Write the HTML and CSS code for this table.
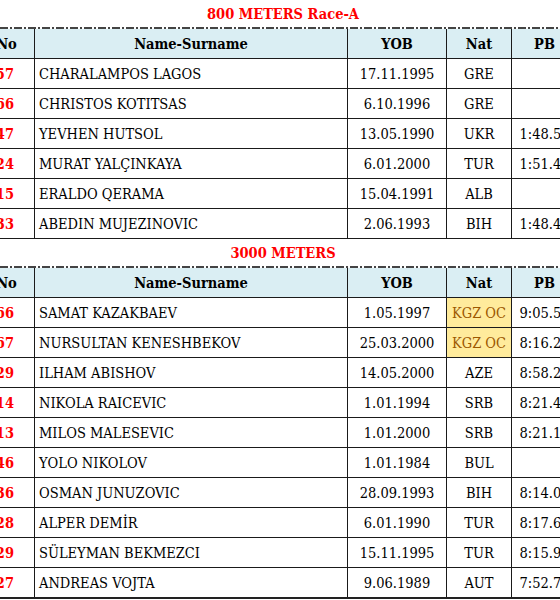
FILE: index.html
```html
<!DOCTYPE html>
<html>
<head>
<meta charset="utf-8">
<link rel="stylesheet" href="styles.css">
</head>
<body>
<div class="sheet">
  <div class="title">800 METERS Race-A</div>
  <div class="dashline"></div>
  <table class="grid">
    <colgroup><col class="c-no"><col class="c-name"><col class="c-yob"><col class="c-nat"><col class="c-pb"></colgroup>
    <thead><tr><th class="no-h">No</th><th>Name-Surname</th><th>YOB</th><th>Nat</th><th>PB</th></tr></thead>
    <tbody>
      <tr><td class="no">157</td><td class="name">CHARALAMPOS LAGOS</td><td>17.11.1995</td><td>GRE</td><td></td></tr>
      <tr><td class="no">166</td><td class="name">CHRISTOS KOTITSAS</td><td>6.10.1996</td><td>GRE</td><td></td></tr>
      <tr><td class="no">147</td><td class="name">YEVHEN HUTSOL</td><td>13.05.1990</td><td>UKR</td><td>1:48.50</td></tr>
      <tr><td class="no">124</td><td class="name">MURAT YALÇINKAYA</td><td>6.01.2000</td><td>TUR</td><td>1:51.40</td></tr>
      <tr><td class="no">115</td><td class="name">ERALDO QERAMA</td><td>15.04.1991</td><td>ALB</td><td></td></tr>
      <tr><td class="no">133</td><td class="name">ABEDIN MUJEZINOVIC</td><td>2.06.1993</td><td>BIH</td><td>1:48.40</td></tr>
    </tbody>
  </table>
  <div class="title">3000 METERS</div>
  <div class="dashline"></div>
  <table class="grid last">
    <colgroup><col class="c-no"><col class="c-name"><col class="c-yob"><col class="c-nat"><col class="c-pb"></colgroup>
    <thead><tr><th class="no-h">No</th><th>Name-Surname</th><th>YOB</th><th>Nat</th><th>PB</th></tr></thead>
    <tbody>
      <tr><td class="no">166</td><td class="name">SAMAT KAZAKBAEV</td><td>1.05.1997</td><td class="neutral">KGZ OC</td><td>9:05.50</td></tr>
      <tr><td class="no">167</td><td class="name">NURSULTAN KENESHBEKOV</td><td>25.03.2000</td><td class="neutral">KGZ OC</td><td>8:16.20</td></tr>
      <tr><td class="no">129</td><td class="name">ILHAM ABISHOV</td><td>14.05.2000</td><td>AZE</td><td>8:58.20</td></tr>
      <tr><td class="no">114</td><td class="name">NIKOLA RAICEVIC</td><td>1.01.1994</td><td>SRB</td><td>8:21.40</td></tr>
      <tr><td class="no">113</td><td class="name">MILOS MALESEVIC</td><td>1.01.2000</td><td>SRB</td><td>8:21.10</td></tr>
      <tr><td class="no">146</td><td class="name">YOLO NIKOLOV</td><td>1.01.1984</td><td>BUL</td><td></td></tr>
      <tr><td class="no">136</td><td class="name">OSMAN JUNUZOVIC</td><td>28.09.1993</td><td>BIH</td><td>8:14.00</td></tr>
      <tr><td class="no">128</td><td class="name">ALPER DEMİR</td><td>6.01.1990</td><td>TUR</td><td>8:17.60</td></tr>
      <tr><td class="no">129</td><td class="name">SÜLEYMAN BEKMEZCI</td><td>15.11.1995</td><td>TUR</td><td>8:15.90</td></tr>
      <tr><td class="no">127</td><td class="name">ANDREAS VOJTA</td><td>9.06.1989</td><td>AUT</td><td>7:52.70</td></tr>
    </tbody>
  </table>
</div>
</body>
</html>
```
FILE: styles.css
```css
html, body {
  margin: 0;
  padding: 0;
  background: #ffffff;
}
.sheet {
  width: 560px;
  height: 600px;
  overflow: hidden;
  font-family: "DejaVu Serif Condensed", "DejaVu Serif", serif;
  font-stretch: condensed;
  font-size: 14.5px;
  color: #000;
}
.title {
  height: 27px;
  line-height: 27px;
  padding-left: 6px;
  text-align: center;
  color: #ff0000;
  font-weight: bold;
  font-size: 14.5px;
}
.dashline {
  height: 2px;
  width: 560px;
  background: repeating-linear-gradient(to right, #444 0 8px, transparent 8px 10px, #444 10px 12px, transparent 12px 14px);
}
.grid {
  border-collapse: collapse;
  table-layout: fixed;
  margin-left: -22px;
  width: 599px;
}
.c-no { width: 56px; }
.c-name { width: 313px; }
.c-yob { width: 99px; }
.c-nat { width: 65px; }
.c-pb { width: 66px; }
.grid th,
.grid td {
  border: 1px solid #1a1a1a;
  height: 29px;
  padding: 0;
  text-align: center;
  vertical-align: middle;
  white-space: nowrap;
  overflow: hidden;
}
.grid th {
  border-top: none;
  background: #daeef3;
  font-weight: bold;
}
.grid td.no {
  color: #ff0000;
  font-weight: bold;
  text-align: right;
  padding-right: 20px;
}
.grid td.name {
  text-align: left;
  padding-left: 4px;
}
.grid td.neutral {
  background: #ffeb9c;
  color: #9c5700;
}
.grid.last tbody tr:last-child td {
  border-bottom: 2px solid #222;
}
```
